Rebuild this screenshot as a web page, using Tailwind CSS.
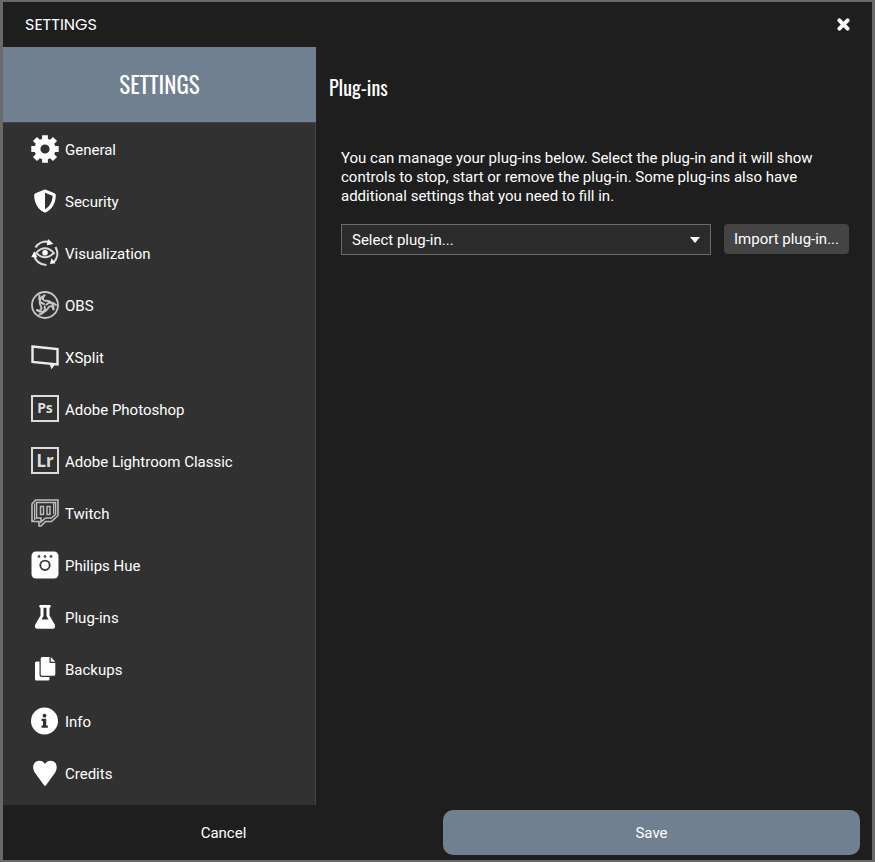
<!DOCTYPE html>
<html lang="en">
<head>
    <meta charset="UTF-8">
    <meta name="viewport" content="width=device-width, initial-scale=1.0">
    <title>Settings</title>
    <script src="https://cdn.jsdelivr.net/npm/@tailwindcss/browser@4"></script>
</head>
<body class="bg-[#1e1e1e] text-white font-[Roboto,sans-serif] text-[15px]">
    <div class="min-h-screen flex flex-col border-x-3 border-y-2 border-[#696969]">

        <!-- Title bar -->
        <header class="h-[45px] shrink-0 flex items-center justify-between pl-[22px] pr-[22px]">
            <span class="font-[Poppins,Lato,sans-serif] text-base">SETTINGS</span>
            <button type="button" aria-label="Close" class="w-[13px] h-[13px]">
                <svg viewBox="0 0 12 12" class="w-[13px] h-[13px]" stroke="#fff" stroke-width="3.6" stroke-linecap="round"><path d="M2.2 2.2l7.6 7.6M9.8 2.2L2.2 9.8"/></svg>
            </button>
        </header>

        <div class="flex-1 flex">
            <!-- Sidebar -->
            <aside class="w-[313px] shrink-0 flex flex-col bg-[#313131]">
                <h1 class="h-[75px] flex items-center justify-center bg-[#708090] font-[Oswald,'Roboto_Condensed','Liberation_Sans_Narrow',sans-serif] text-[23px]">SETTINGS</h1>
                <nav class="flex-1 border-t border-r border-[#444] pl-7 pb-1">
                    <a href="#general" class="flex items-center gap-[6px] h-[52px]">
                        <svg viewBox="0 0 28 28" class="w-7 h-7" fill="none" stroke="#fff">
                            <circle cx="14" cy="14" r="7.6" stroke-width="6"/>
                            <path stroke-width="5.8" stroke-linejoin="round" d="M14 5V.3M14 23v4.7M5 14H.3M23 14h4.7M7.8 7.8L4 4M20.2 7.8L24 4M7.8 20.2L4 24M20.2 20.2L24 24"/>
                        </svg>
                        <span class="pt-0.5">General</span>
                    </a>
                    <a href="#security" class="flex items-center gap-[6px] h-[52px]">
                        <svg viewBox="0 0 28 28" class="w-7 h-7" fill="#fff">
                            <path fill-rule="evenodd" d="M14 2.4Q14.5 2.4 15 2.7L23.5 6.2Q24.8 6.8 24.8 8.3C24.8 16 21 22.5 15 25.3Q14 25.7 13 25.3C7 22.500 3.2 16 3.2 8.3Q3.2 6.8 4.5 6.2L13 2.7Q13.5 2.4 14 2.4zM14 5.7V22.2C18.5 19.8 21.5 14.8 21.6 8.8z"/>
                        </svg>
                        <span class="pt-0.5">Security</span>
                    </a>
                    <a href="#visualization" class="flex items-center gap-[6px] h-[52px]">
                        <svg viewBox="0 0 28 28" class="w-7 h-7" fill="none" stroke="#dcdcdc">
                            <path stroke-width="1.8" d="M5 14Q14 4.500 23 14Q14 22.500 5 14z"/>
                            <circle cx="14" cy="13.7" r="2.8" fill="#fff" stroke="none"/>
                            <path stroke-width="2.2" d="M4.500 8.500C7.500 3.500 13 1.800 18 3M3 16.500C4.500 22 9.500 26 15.500 26M24.500 8C27.500 13.500 26.500 19.500 22.500 23.300"/>
                            <path fill="#fff" stroke="none" d="M17 0L22.500 5L15.800 6.200zM3.300 12.300L6.300 18.500L.3 18zM19 25L20.500 19.200L24.500 24.300z"/>
                        </svg>
                        <span class="pt-0.5">Visualization</span>
                    </a>
                    <a href="#obs" class="flex items-center gap-[6px] h-[52px]">
                        <svg viewBox="0 0 28 28" class="w-7 h-7" fill="none" stroke="#c8c8c8" stroke-linecap="round">
                            <circle cx="14" cy="14" r="13" stroke-width="1.8"/>
                            <g stroke-width="1.9">
                                <path d="M13.5 4.5C10.5 7.5 12 10 15.5 9.8C20 10 23 13.500 22.5 18.300M8.500 4.500C7.500 9 9.500 12 13 13"/>
                                <path d="M13.5 4.5C10.5 7.5 12 10 15.5 9.8C20 10 23 13.500 22.5 18.300M8.500 4.500C7.500 9 9.500 12 13 13" transform="rotate(120 14 14)"/>
                                <path d="M13.5 4.5C10.5 7.5 12 10 15.5 9.8C20 10 23 13.500 22.5 18.300M8.500 4.500C7.500 9 9.500 12 13 13" transform="rotate(240 14 14)"/>
                            </g>
                        </svg>
                        <span class="pt-0.5">OBS</span>
                    </a>
                    <a href="#xsplit" class="flex items-center gap-[6px] h-[52px]">
                        <svg viewBox="0 0 28 28" class="w-7 h-7" fill="none" stroke="#ececec">
                            <path stroke-width="2.4" d="M1.500 3.500L26.500 6V21.500L1.500 19z"/>
                            <path fill="#ececec" stroke="none" d="M18.500 21L20.500 26.200L24 21.500z"/>
                        </svg>
                        <span class="pt-0.5">XSplit</span>
                    </a>
                    <a href="#photoshop" class="flex items-center gap-[6px] h-[52px]">
                        <svg viewBox="0 0 28 28" class="w-7 h-7">
                            <rect x="1" y="1" width="26" height="25" fill="none" stroke="#dcdcdc" stroke-width="2"/>
                            <text x="14" y="18" text-anchor="middle" fill="#dcdcdc" font-family="Noto Sans, sans-serif" font-weight="700" font-size="14">Ps</text>
                        </svg>
                        <span class="pt-0.5">Adobe Photoshop</span>
                    </a>
                    <a href="#lightroom" class="flex items-center gap-[6px] h-[52px]">
                        <svg viewBox="0 0 28 28" class="w-7 h-7">
                            <rect x="1" y="1" width="26" height="25" fill="none" stroke="#dcdcdc" stroke-width="2"/>
                            <text x="14" y="20" text-anchor="middle" fill="#dcdcdc" font-family="Noto Sans, sans-serif" font-weight="700" font-size="17">Lr</text>
                        </svg>
                        <span class="pt-0.5">Adobe Lightroom Classic</span>
                    </a>
                    <a href="#twitch" class="flex items-center gap-[6px] h-[52px]">
                        <svg viewBox="0 0 28 28" class="w-7 h-7" fill="none" stroke="#bdbdbd" stroke-width="1.600">
                            <path d="M1 5L4.500 1H27V16.500L20.500 22.500H14.500L10 27H8V22.500H1z"/>
                            <path d="M5.500 3.500H24.500V15.500L20.500 19H14.500L10 23V19H5.500z"/>
                            <path stroke-width="1.500" d="M9.500 7.500H12.500V15.500H9.500zM16 7.500H19V15.500H16z"/>
                            <path stroke-width="1" d="M3.500 4.500V21M1 22.500L5.500 19M22.500 3.500V15"/>
                        </svg>
                        <span class="pt-0.5">Twitch</span>
                    </a>
                    <a href="#hue" class="flex items-center gap-[6px] h-[52px]">
                        <svg viewBox="0 0 28 28" class="w-7 h-7">
                            <rect x=".5" y=".5" width="27" height="27" rx="4.500" fill="#fff"/>
                            <circle cx="14" cy="14.300" r="4.700" fill="none" stroke="#3c3c3c" stroke-width="1.900"/>
                            <g fill="#555"><circle cx="8" cy="5.500" r="1.400"/><circle cx="14" cy="5.500" r="1.400"/><circle cx="20" cy="5.500" r="1.400"/></g>
                        </svg>
                        <span class="pt-0.5">Philips Hue</span>
                    </a>
                    <a href="#plugins" class="flex items-center gap-[6px] h-[52px]" aria-current="page">
                        <svg viewBox="0 0 28 28" class="w-7 h-7" fill="#fff">
                            <path fill-rule="evenodd" d="M9.500 2H18.500Q19.800 2 19.800 3.300T18.500 4.700V12.500L23.700 21.500Q25.200 25.500 21.500 25.800H6.500Q2.800 25.500 4.300 21.500L9.500 12.500V4.700Q8.200 4.600 8.200 3.300T9.500 2zM12.500 4.700V13L10.500 16.500H17.500L15.500 13V4.700z"/>
                        </svg>
                        <span class="pt-0.5">Plug-ins</span>
                    </a>
                    <a href="#backups" class="flex items-center gap-[6px] h-[52px]">
                        <svg viewBox="0 0 28 28" class="w-7 h-7" fill="#fff">
                            <path d="M5.500 6.500H8.500V19.500Q8.500 22 11 22H18.500V24Q18.500 25.500 17 25.500H5.500Q4 25.500 4 24V8Q4 6.500 5.500 6.500z"/>
                            <path d="M11.200 2H18.500V7.300Q18.500 8 19.200 8H24.300V19.200Q24.300 20.700 22.800 20.700H11.200Q9.700 20.700 9.700 19.200V3.500Q9.700 2 11.200 2z"/>
                            <path d="M19.800 2L24.300 6.700H19.800z"/>
                        </svg>
                        <span class="pt-0.5">Backups</span>
                    </a>
                    <a href="#info" class="flex items-center gap-[6px] h-[52px]">
                        <svg viewBox="0 0 28 28" class="w-7 h-7">
                            <circle cx="13.500" cy="14" r="13.500" fill="#fff"/>
                            <circle cx="13.500" cy="8.700" r="1.900" fill="#313131"/>
                            <path fill="#313131" d="M10.500 11.800H15.200V18.500H16.800V20.800H10.500V18.500H12V14H10.500z"/>
                        </svg>
                        <span class="pt-0.5">Info</span>
                    </a>
                    <a href="#credits" class="flex items-center gap-[6px] h-[52px]">
                        <svg viewBox="0 0 28 28" class="w-7 h-7" fill="#fff">
                            <path d="M14 5C16 .8 22.500 .4 24.800 4.500C26.300 7.500 26 11 23.500 14.500L15 26.300Q14 27.300 13 26.300L4.500 14.500C2 11 1.300 7.500 3.200 4.500C5.500 .4 12 .8 14 5z"/>
                        </svg>
                        <span class="pt-0.5">Credits</span>
                    </a>
                </nav>
            </aside>

            <!-- Plug-in settings -->
            <main class="flex-1 pl-[13px] pr-[23px] pt-[25px]">
                <h2 class="font-[Oswald,'Roboto_Condensed','Liberation_Sans_Narrow',sans-serif] text-xl leading-[30px]">Plug-ins</h2>
                <div class="pl-3 pt-[47px]">
                    <p class="leading-[19px]">You can manage your plug-ins below. Select the plug-in and it will show controls to stop, start or remove the plug-in. Some plug-ins also have additional settings that you need to fill in.</p>
                    <div class="mt-[18px] flex items-start gap-[13px]">
                        <div class="relative flex-1">
                            <select aria-label="Plug-in" class="appearance-none block w-full h-[31px] pl-[10px] pr-8 pt-0.5 bg-[#2b2b2b] border border-[#6b6b6b]">
                                <option>Select plug-in...</option>
                            </select>
                            <svg viewBox="0 0 10 6" class="absolute right-[11px] top-[13px] w-[10px] h-[6px] pointer-events-none" fill="#fff"><path d="M0 0h10L5 6z"/></svg>
                        </div>
                        <button type="button" class="w-[125px] h-[30px] rounded-sm bg-[#444]">Import plug-in...</button>
                    </div>
                </div>
            </main>
        </div>

        <!-- Footer buttons -->
        <footer class="shrink-0 grid grid-cols-2 gap-[11px] px-3 py-[5px]">
            <button type="button" class="h-[45px] pt-0.5">Cancel</button>
            <button type="button" class="h-[45px] pt-0.5 rounded-[10px] bg-[#708090]">Save</button>
        </footer>
    </div>
</body>
</html>
